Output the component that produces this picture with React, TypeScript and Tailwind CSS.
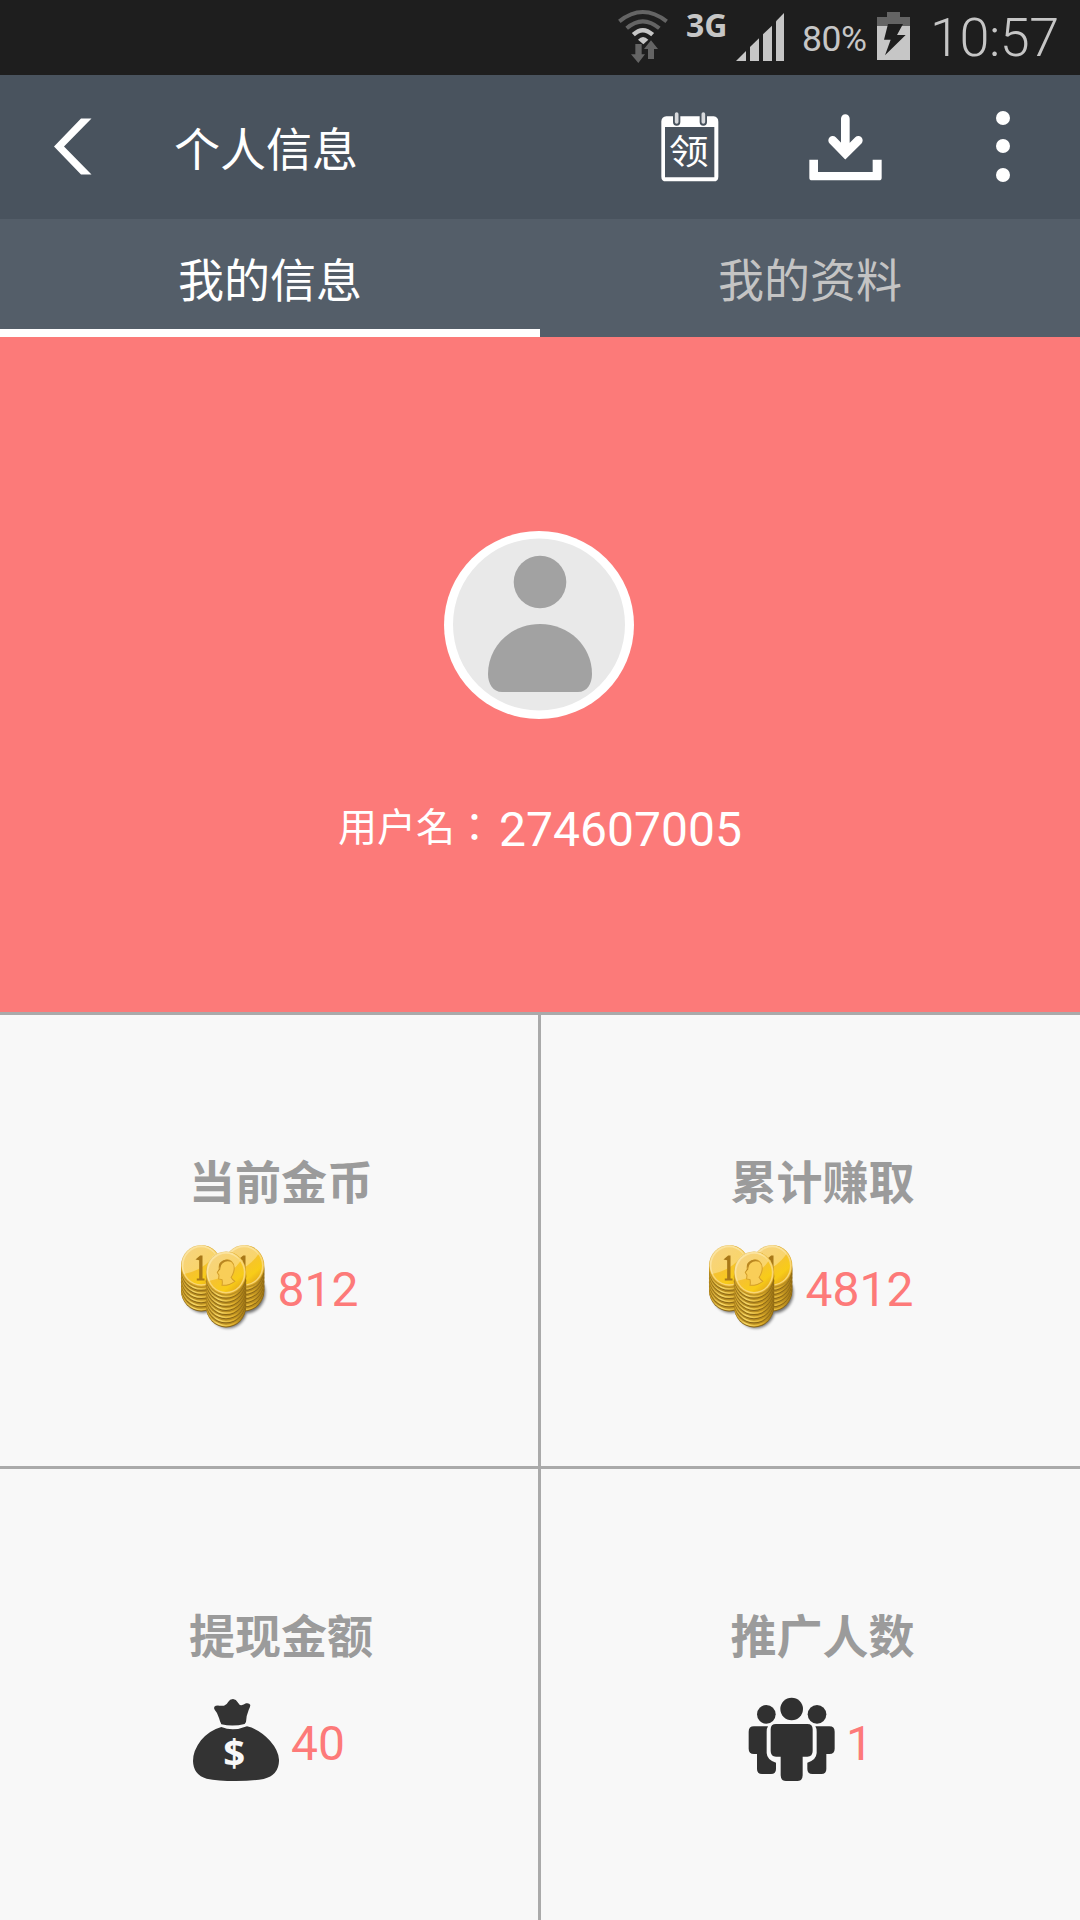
import type { ReactNode } from "react";

const tabs = [
  { label: "我的信息", active: true },
  { label: "我的资料", active: false },
];

function WifiIcon() {
  return (
    <svg className="w-[50px] h-[54px]" viewBox="54 27 150 162" fill="none">
      <path d="M58 64 Q128 8 200 64" stroke="#646464" strokeWidth="12" />
      <path d="M80 85 Q128 43 178 85" stroke="#646464" strokeWidth="12" />
      <path d="M100 104 Q128 77 158 104" stroke="#c6c6c6" strokeWidth="13" />
      <path d="M114 119 Q129 103 145 119 L130 133 Z" fill="#c6c6c6" />
      <path d="M106 132 h19 v31 h10 l-20 26 -22 -26 h13 Z" fill="#646464" />
      <path d="M153 121 l21 26 h-12 v30 h-18 v-30 h-12 Z" fill="#646464" />
    </svg>
  );
}

function SignalIcon() {
  return (
    <svg className="w-12 h-12" viewBox="408 39 144 144" fill="#c6c6c6">
      <path d="M408 183 L438 153 V183 Z" />
      <path d="M450 141 L477 115 V183 H450 Z" />
      <path d="M489 103 L516 77 V183 H489 Z" />
      <path d="M528 64 L552 39 V183 H528 Z" />
    </svg>
  );
}

function BatteryIcon() {
  return (
    <svg className="w-[33px] h-12" viewBox="831 36 99 144">
      <path d="M861 36 H900 V51 H930 V79 H831 V51 H861 Z" fill="#646464" />
      <path d="M831 78 H930 V180 H831 Z" fill="#c6c6c6" />
      <path d="M864 72 H909 L891 105 H917 L855 166 L872 119 H852 Z" fill="#1e1e1e" />
    </svg>
  );
}

function BackIcon() {
  return (
    <svg className="w-[38px] h-[58px]" viewBox="0 0 38 58" fill="#fff">
      <path d="M27 0.500 H37.500 L10 28.500 L37.500 56.500 H27 L0 28.500 Z" />
    </svg>
  );
}

function CalendarIcon() {
  return (
    <svg className="w-[58px] h-[70px]" viewBox="184 126 174 210">
      <path
        fillRule="evenodd"
        d="M200 139 H342 Q356 141 356 155 V320 Q356 334 342 334 H199 Q185 334 185 320 V154 Q186 141 200 139 Z M196 171 V322 H344 V171 Z"
        fill="#fff"
      />
      <path d="M231 132 V156 M311 132 V156" stroke="#48535e" strokeWidth="22" strokeLinecap="round" />
      <path d="M231 132 V156 M311 132 V156" stroke="#d8dadd" strokeWidth="11" strokeLinecap="round" />
      <text
        transform="translate(267 283) scale(1 0.85)"
        textAnchor="middle"
        fill="#fff"
        fontSize="120"
        className="font-['Noto_Sans_CJK_SC',sans-serif]"
      >
        领
      </text>
    </svg>
  );
}

function DownloadIcon() {
  return (
    <svg className="w-[73px] h-[67px]" viewBox="629 131 219 201">
      <path d="M738 145 V248 M700 210 L738 249 L777 210" fill="none" stroke="#fff" strokeWidth="26" strokeLinecap="round" />
      <path d="M738 266 L688 216 L738 226 L789 216 Z" fill="#fff" />
      <path d="M630 268 H656 V305 H820 V268 H847 V322 Q847 330 839 330 H638 Q630 330 630 322 Z" fill="#fff" />
    </svg>
  );
}

function Avatar() {
  return (
    <svg className="w-[192px] h-[190px]" viewBox="1 0 192 190">
      <ellipse cx="96" cy="95" rx="95" ry="94" fill="#fff" />
      <circle cx="96" cy="94.500" r="86" fill="#e9e9e9" />
      <circle cx="97" cy="52" r="26.300" fill="#a2a2a2" />
      <path d="M97 94 C126 94 149 116 149 144 C149 154 144 162 135 162 H59 C50 162 45 154 45 144 C45 116 68 94 97 94 Z" fill="#a2a2a2" />
    </svg>
  );
}

function CoinStack({ cx, cy, rx, ry, layers }: { cx: number; cy: number; rx: number; ry: number; layers: number }) {
  const offsets = Array.from({ length: layers }, (_, i) => (layers - i) * 12.3);
  return (
    <g>
      {offsets.map((dy) => (
        <g key={dy}>
          <ellipse cx={cx} cy={cy + dy} rx={rx} ry={ry} fill="#8a6616" />
          <ellipse cx={cx} cy={cy + dy - 3} rx={rx} ry={ry} fill="url(#coinEdge)" />
          <ellipse cx={cx} cy={cy + dy - 8} rx={rx - 1} ry={ry} fill="#b88d20" />
        </g>
      ))}
      <ellipse cx={cx} cy={cy} rx={rx} ry={ry} fill="#dba82a" />
      <ellipse cx={cx} cy={cy - 1} rx={rx - 2} ry={ry - 2} fill="#f9d774" />
      <ellipse cx={cx} cy={cy} rx={rx - 7} ry={ry - 7} fill="url(#coinFace)" />
      <path
        d={`M${cx - rx + 9} ${cy + 24} Q${cx + 8} ${cy + 14} ${cx + rx - 17} ${cy - 35} A${rx - 8} ${ry - 8} 0 0 0 ${cx - rx + 9} ${cy + 24} Z`}
        fill="#fff"
        opacity="0.3"
      />
    </g>
  );
}

function CoinsIcon() {
  return (
    <svg className="w-[86px] h-[86px] overflow-visible" viewBox="65 345 252 256">
      <defs>
        <linearGradient id="coinEdge" x1="0" x2="1">
          <stop offset="0" stopColor="#c99a22" />
          <stop offset="0.3" stopColor="#f6d766" />
          <stop offset="0.7" stopColor="#dfae2a" />
          <stop offset="1" stopColor="#8f680f" />
        </linearGradient>
        <linearGradient id="coinFace" x1="0" y1="0" x2="0.8" y2="1">
          <stop offset="0" stopColor="#f3c14a" />
          <stop offset="0.55" stopColor="#f6c32d" />
          <stop offset="0.8" stopColor="#f8cc18" />
          <stop offset="1" stopColor="#e5a91c" />
        </linearGradient>
        <filter id="coinShadow" x="-20%" y="-20%" width="140%" height="140%">
          <feGaussianBlur stdDeviation="4" />
        </filter>
      </defs>
      <g fill="#000" opacity="0.55" filter="url(#coinShadow)">
        <ellipse cx="132" cy="490" rx="56" ry="60" />
        <ellipse cx="260" cy="490" rx="57" ry="61" />
        <ellipse cx="206" cy="535" rx="57" ry="61" />
      </g>
      <CoinStack cx={126} cy={410} rx={60} ry={62} layers={6} />
      <CoinStack cx={254} cy={410} rx={60} ry={62} layers={6} />
      <path d="M109 391 L123 379 H130 V448 H136 V454 H113 V448 H120 V393 Z" fill="#a87818" />
      <path d="M237 391 L251 379 H258 V448 H249 V393 Z" fill="#a87818" />
      <CoinStack cx={200} cy={431} rx={60} ry={64} layers={8} />
      <path
        d="M190 398 Q204 386 216 397 Q228 408 223 427 Q219 440 215 444 Q219 452 226 456 Q210 469 188 468 Q190 459 188 451 L178 449 L179 438 L174 430 L180 420 Q177 405 190 398 Z"
        fill="#f9ce58"
        stroke="#d49f2a"
        strokeWidth="3"
      />
      <path d="M174 429 L181 417 Q174 402 192 393 Q208 389 217 399 Q201 393 190 402 Q182 408 183 420 Z" fill="#b98621" />
    </svg>
  );
}

function MoneyBagIcon() {
  return (
    <svg className="w-[86px] h-[84px]" viewBox="102 325 258 252" fill="#333">
      <path d="M166 348 Q170 344 181 345 H195 Q203 343 208 333 Q212 325 222 325 Q232 326 236 335 Q241 344 247 344 Q254 343 261 338 Q271 336 274 343 Q274 348 269 358 Q262 374 261 394 L257 400 Q222 409 187 401 Q183 393 180 382 Q175 365 167 357 Q164 352 166 348 Z" />
      <path d="M187 409 Q222 424 264 407 Q300 415 333 450 Q361 482 360 511 Q359 553 314 565 Q280 571 231 571 Q176 571 143 564 Q103 553 102 511 Q102 480 126 449 Q151 419 187 409 Z" />
      <text
        x="226"
        y="528"
        textAnchor="middle"
        fill="#f8f8f8"
        fontSize="115"
        className="font-['Open_Sans',sans-serif] font-bold"
      >
        $
      </text>
    </svg>
  );
}

function PeopleIcon() {
  return (
    <svg className="w-[86px] h-[84px] overflow-visible" viewBox="148 326 258 252" fill="#303030">
      <circle cx="203" cy="372" r="28" />
      <circle cx="355" cy="372" r="28" />
      <circle cx="279" cy="356" r="34" />
      <path d="M166 408 H208 Q204 414 204 424 V488 Q205 509 232 517 V536 Q232 551 217 551 H190 Q175 551 175 536 V491 H166 Q150 491 150 475 V424 Q150 408 166 408 Z" />
      <path d="M392 408 H350 Q354 414 354 424 V488 Q353 509 326 517 V536 Q326 551 341 551 H368 Q383 551 383 536 V491 H392 Q408 491 408 475 V424 Q408 408 392 408 Z" />
      <path d="M232 401 H326 Q342 401 342 417 V482 Q342 499 326 499 H312 V555 Q312 572 296 572 H262 Q246 572 246 555 V499 H232 Q216 499 216 482 V417 Q216 401 232 401 Z" />
    </svg>
  );
}

function StatCell({ label, value, icon }: { label: string; value: string; icon: ReactNode }) {
  return (
    <div className="bg-[#f8f8f8] flex flex-col items-center pt-[137px]">
      <div className="h-[54px] leading-[54px] ml-6 text-[46px] font-bold text-[#9b9b9b]">{label}</div>
      <div className="mt-[39px] h-[84px] flex items-center gap-3">
        {icon}
        <span className="font-[Roboto,sans-serif] text-5xl leading-[56px] pt-[5px] text-[#fd7a79]">{value}</span>
      </div>
    </div>
  );
}

export default function App() {
  return (
    <div className="w-[1080px] h-[1920px] flex flex-col overflow-hidden bg-[#aaaaaa] font-['Noto_Sans_CJK_SC',sans-serif]">
      <div className="h-[75px] shrink-0 bg-[#1e1e1e] flex items-start text-[#c6c6c6] pl-[618px] pt-[9px]">
        <WifiIcon />
        <span className="ml-[18px] w-[42px] font-['Noto_Sans',sans-serif] font-bold text-[32px] leading-[31px]">3G</span>
        <div className="ml-[8px] mt-[4px]">
          <SignalIcon />
        </div>
        <span className="ml-[18px] w-[68px] mt-[9px] font-[Roboto,sans-serif] text-[35.500px] leading-[42px] tracking-[-0.5px]">80%</span>
        <div className="ml-[7px] mt-[3px]">
          <BatteryIcon />
        </div>
        <span className="ml-[20px] -mt-[2px] font-[Roboto,sans-serif] font-light text-[54px] leading-[62px] tracking-[-0.5px]">10:57</span>
      </div>

      <header className="h-[144px] shrink-0 bg-[#49535e] flex items-center text-white">
        <div className="ml-[54px]">
          <BackIcon />
        </div>
        <h1 className="ml-[82px] pb-[3px] text-[46px] leading-[60px]">个人信息</h1>
        <div className="ml-auto flex items-center pr-[70px]">
          <CalendarIcon />
          <div className="ml-[90px]">
            <DownloadIcon />
          </div>
          <div className="ml-[114px] pb-[2px] flex flex-col gap-[14.500px]">
            <div className="w-[14px] h-[14px] rounded-full bg-white" />
            <div className="w-[14px] h-[14px] rounded-full bg-white" />
            <div className="w-[14px] h-[14px] rounded-full bg-white" />
          </div>
        </div>
      </header>

      <nav className="h-[118px] shrink-0 bg-[#545e69] grid grid-cols-2">
        {tabs.map((tab) => (
          <div
            key={tab.label}
            className={
              tab.active
                ? "text-center text-[46px] leading-[116px] text-white border-b-[8px] border-white h-[118px]"
                : "text-center text-[46px] leading-[116px] text-[#c4c4c4] h-[118px]"
            }
          >
            {tab.label}
          </div>
        ))}
      </nav>

      <section className="h-[675px] shrink-0 bg-[#fc7a79] flex flex-col items-center text-white pt-[193px]">
        <Avatar />
        <div className="mt-[78px] flex items-start">
          <span className="text-[39px] leading-[52px] w-[161px] font-['Noto_Sans_CJK_TC',sans-serif]" lang="zh-TW">
            用户名{"\uFF1A"}
          </span>
          <span className="font-[Roboto,sans-serif] text-5xl leading-[56px] pt-[4px]">274607005</span>
        </div>
      </section>

      <main className="mt-[3px] grow grid grid-cols-[538px_539px] grid-rows-[451px_451px] gap-[3px]">
        <StatCell label="当前金币" value="812" icon={<CoinsIcon />} />
        <StatCell label="累计赚取" value="4812" icon={<CoinsIcon />} />
        <StatCell label="提现金额" value="40" icon={<MoneyBagIcon />} />
        <StatCell label="推广人数" value="1" icon={<PeopleIcon />} />
      </main>
    </div>
  );
}
